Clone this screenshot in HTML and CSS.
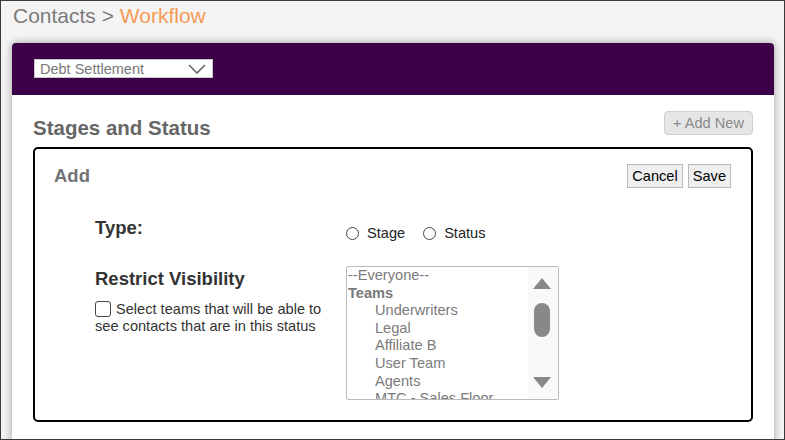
FILE: index.html
```html
<!DOCTYPE html>
<html lang="en">
<head>
    <meta charset="UTF-8">
    <title>Contacts - Workflow</title>
    <link rel="stylesheet" href="styles.css">
</head>
<body>
    <div class="frame">
        <div class="breadcrumb">Contacts &gt; <span class="current">Workflow</span></div>

        <div class="card">
            <div class="card-header">
                <div class="workflow-select">
                    <span>Debt Settlement</span>
                    <svg width="18" height="10" viewBox="0 0 18 10"><path d="M1 1 L9 9 L17 1" fill="none" stroke="#666" stroke-width="1.6"/></svg>
                </div>
            </div>

            <div class="card-body">
                <div class="section-head">
                    <h2>Stages and Status</h2>
                    <button class="btn-add">+ Add New</button>
                </div>

                <div class="edit-box">
                    <div class="edit-head">
                        <h3>Add</h3>
                        <div class="edit-actions">
                            <button class="btn">Cancel</button>
                            <button class="btn">Save</button>
                        </div>
                    </div>

                    <div class="form">
                        <div class="label">Type:</div>
                        <div class="radios">
                            <label><span class="radio"></span>Stage</label>
                            <label><span class="radio"></span>Status</label>
                        </div>

                        <div>
                            <div class="label restrict">Restrict Visibility</div>
                            <p class="check-text"><span class="checkbox"></span>Select teams that will be able to see contacts that are in this status</p>
                        </div>
                        <div class="listbox">
                            <div class="list-items">
                                <div>--Everyone--</div>
                                <div class="group">Teams</div>
                                <div class="sub">Underwriters</div>
                                <div class="sub">Legal</div>
                                <div class="sub">Affiliate B</div>
                                <div class="sub">User Team</div>
                                <div class="sub">Agents</div>
                                <div class="sub">MTC - Sales Floor</div>
                            </div>
                            <div class="scrollbar">
                                <span class="arrow-up"></span>
                                <span class="thumb"></span>
                                <span class="arrow-down"></span>
                            </div>
                        </div>
                    </div>
                </div>
            </div>
        </div>
    </div>
</body>
</html>
```

FILE: styles.css
```css
/* Base */
body {
    margin: 0;
    font-family: 'Liberation Sans', Arial, sans-serif;
}

.frame {
    width: 785px;
    height: 440px;
    box-sizing: border-box;
    border: 1px solid #3a3a3a;
    background-color: #f4f4f4;
    overflow: hidden;
}

/* Breadcrumb */
.breadcrumb {
    padding: 3px 0 0 12px;
    font-size: 21px;
    line-height: 23px;
    color: #7b7b7b;
}

.breadcrumb .current {
    color: #f79a55;
}

/* Card */
.card {
    margin: 16px 10px 0 11px;
    height: 420px;
    background-color: white;
    border-radius: 4px 4px 0 0;
    box-shadow: 0 0 8px rgba(0,0,0,0.35);
}

.card-header {
    height: 52px;
    box-sizing: border-box;
    padding: 16px 0 0 22px;
    background-color: #3c0048;
    border-radius: 4px 4px 0 0;
}

.workflow-select {
    display: flex;
    align-items: center;
    justify-content: space-between;
    width: 179px;
    height: 19px;
    box-sizing: border-box;
    padding: 0 6px 0 5px;
    background-color: white;
    border: 1px solid #c8c8c8;
    font-size: 14.5px;
    color: #777;
}

.card-body {
    padding: 16px 21px 0 21px;
}

.section-head {
    display: flex;
    justify-content: space-between;
    align-items: flex-start;
    margin-bottom: 8px;
}

.section-head h2 {
    margin: 6px 0 0 0;
    font-size: 20.5px;
    line-height: 22px;
    color: #666;
}

.btn-add {
    height: 24px;
    padding: 0 8px;
    background-color: #e6e6e6;
    border: 1px solid #cfcfcf;
    border-radius: 4px;
    font-family: inherit;
    font-size: 14.6px;
    color: #8a8a8a;
}

/* Edit box */
.edit-box {
    height: 275px;
    box-sizing: border-box;
    border: 2px solid #000;
    border-radius: 5px;
    padding: 15px 20px 0 19px;
}

.edit-head {
    display: flex;
    justify-content: space-between;
    align-items: center;
}

.edit-head h3 {
    margin: 0;
    font-size: 18.5px;
    line-height: 24px;
    color: #737373;
}

.edit-actions {
    display: flex;
    gap: 5px;
}

.btn {
    height: 24px;
    padding: 0 4px;
    background-color: #efefef;
    border: 1px solid #b9b9b9;
    font-family: inherit;
    font-size: 14.6px;
    color: #000;
}

/* Form */
.form {
    display: grid;
    grid-template-columns: 251px auto;
    row-gap: 24px;
    margin: 29px 0 0 41px;
}

.label {
    font-size: 18.5px;
    line-height: 21px;
    font-weight: bold;
    color: #333;
}

.restrict {
    margin-top: 2px;
}

.radios {
    display: flex;
    gap: 18px;
    padding-top: 8px;
    font-size: 14.6px;
    line-height: 17px;
    color: #222;
}

.radios label {
    display: flex;
    align-items: center;
}

.radio {
    width: 13px;
    height: 13px;
    box-sizing: border-box;
    border: 1px solid #444;
    border-radius: 50%;
    margin-right: 8px;
}

.check-text {
    width: 240px;
    margin: 12px 0 0 0;
    font-size: 14.6px;
    line-height: 17px;
    color: #333;
}

.checkbox {
    display: inline-block;
    width: 16px;
    height: 16px;
    box-sizing: border-box;
    border: 1.5px solid #444;
    border-radius: 3px;
    margin-right: 5px;
    vertical-align: -3px;
}

/* Listbox */
.listbox {
    display: flex;
    width: 213px;
    height: 134px;
    box-sizing: border-box;
    border: 1px solid #bbb;
    border-radius: 2px;
    overflow: hidden;
}

.list-items {
    flex: 1;
    padding-left: 1px;
    font-size: 14.6px;
    line-height: 17.6px;
    color: #7a7a7a;
    white-space: nowrap;
}

.list-items .group {
    font-weight: bold;
}

.list-items .sub {
    padding-left: 27px;
}

.scrollbar {
    position: relative;
    width: 30px;
    background-color: #f9f9f9;
}

.arrow-up,
.arrow-down {
    position: absolute;
    left: 5px;
    width: 0;
    height: 0;
    border-left: 9px solid transparent;
    border-right: 9px solid transparent;
}

.arrow-up {
    top: 11px;
    border-bottom: 11px solid #888;
}

.arrow-down {
    top: 110px;
    border-top: 11px solid #888;
}

.thumb {
    position: absolute;
    top: 36px;
    left: 6px;
    width: 16px;
    height: 34px;
    border-radius: 8px;
    background-color: #888;
}
```
